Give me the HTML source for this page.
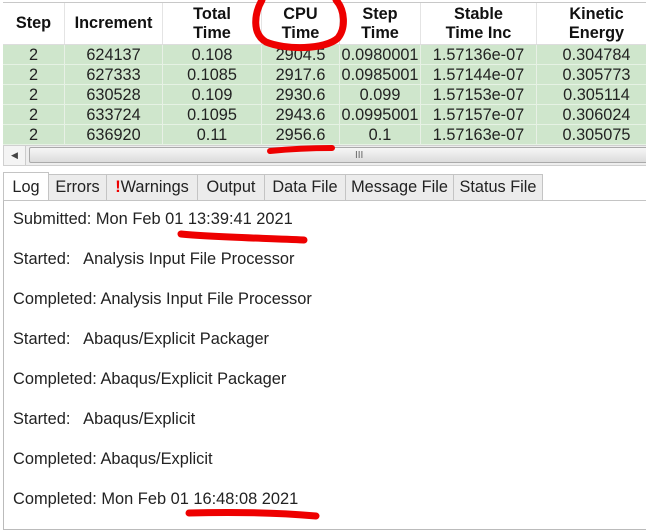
<!DOCTYPE html>
<html><head><meta charset="utf-8"><style>
*{margin:0;padding:0;box-sizing:border-box}
body{width:646px;height:520px;background:#fff;position:relative;overflow:hidden;font-family:"Liberation Sans","DejaVu Sans",sans-serif}
.tbl{position:absolute;left:3px;top:2px;width:660px;border-top:1px solid #c8c8c8}
.row{display:flex;height:20px;line-height:20px;font-size:16.3px;color:#222;background:#cfe6cc;border-bottom:1px solid #e6f2e4}
.hdr{height:42px;background:#fff;font-weight:bold;font-size:16.3px;line-height:19px;color:#111;border-bottom:1px solid #ddd}
.row div,.hdr div{text-align:center;border-right:1px solid #e8f0e6;white-space:nowrap}
.hdr div{border-right:1px solid #e4e4e4;display:flex;align-items:center;justify-content:center;flex-direction:column}
.c1{width:62px}.c2{width:98px}.c3{width:99px}.c4{width:78px}.c5{width:81px}.c6{width:116px}.c7{width:120px}
.sb{position:absolute;left:3px;top:145px;width:650px;height:21px;background:#eee;border:1px solid #d0d0d0}
.sb .b{position:absolute;left:0;top:0;width:22px;height:19px;background:#f4f4f4;border-right:1px solid #ccc;font-size:9px;line-height:19px;text-align:center;color:#444}
.sb .t{position:absolute;left:25px;top:1px;right:0;height:16px;background:linear-gradient(#f6f6f6,#dcdcdc);border:1px solid #aaa;border-radius:2px}
.sb .g{position:absolute;left:325px;top:0;font-size:10px;color:#666;line-height:16px}
.tabs{position:absolute;top:174px;left:3px;height:26px;display:flex}
.tab{height:26px;border:1px solid #c4c4c4;border-bottom:none;background:#ececec;font-size:16.3px;line-height:25px;text-align:center;color:#222;margin-right:-1px;white-space:nowrap;overflow:hidden}
.tab.sel{background:#fff;height:28px;margin-top:-2px;line-height:29px}
.panel{position:absolute;left:3px;top:200px;width:660px;height:330px;border:1px solid #bbb;border-top:1px solid #c4c4c4}
.ln{position:absolute;left:9px;font-size:16.4px;color:#222;white-space:pre}
</style></head><body>
<div class="tbl">
<div class="row hdr"><div class="c1">Step</div><div class="c2">Increment</div><div class="c3">Total<br>Time</div><div class="c4">CPU<br>Time</div><div class="c5">Step<br>Time</div><div class="c6">Stable<br>Time Inc</div><div class="c7">Kinetic<br>Energy</div></div>
<div class="row"><div class="c1">2</div><div class="c2">624137</div><div class="c3">0.108</div><div class="c4">2904.5</div><div class="c5">0.0980001</div><div class="c6">1.57136e-07</div><div class="c7">0.304784</div></div>
<div class="row"><div class="c1">2</div><div class="c2">627333</div><div class="c3">0.1085</div><div class="c4">2917.6</div><div class="c5">0.0985001</div><div class="c6">1.57144e-07</div><div class="c7">0.305773</div></div>
<div class="row"><div class="c1">2</div><div class="c2">630528</div><div class="c3">0.109</div><div class="c4">2930.6</div><div class="c5">0.099</div><div class="c6">1.57153e-07</div><div class="c7">0.305114</div></div>
<div class="row"><div class="c1">2</div><div class="c2">633724</div><div class="c3">0.1095</div><div class="c4">2943.6</div><div class="c5">0.0995001</div><div class="c6">1.57157e-07</div><div class="c7">0.306024</div></div>
<div class="row"><div class="c1">2</div><div class="c2">636920</div><div class="c3">0.11</div><div class="c4">2956.6</div><div class="c5">0.1</div><div class="c6">1.57163e-07</div><div class="c7">0.305075</div></div>
</div>
<div class="sb"><div class="b">◀</div><div class="t"><span class="g">III</span></div></div>
<div class="tabs">
<div class="tab sel" style="width:46px">Log</div>
<div class="tab" style="width:59px">Errors</div>
<div class="tab" style="width:92px"><span style="color:#e00;font-weight:bold">!</span>Warnings</div>
<div class="tab" style="width:68px">Output</div>
<div class="tab" style="width:82px">Data File</div>
<div class="tab" style="width:109px">Message File</div>
<div class="tab" style="width:90px">Status File</div>
</div>
<div class="panel">
<div class="ln" style="top:9px">Submitted: Mon Feb 01 13:39:41 2021</div>
<div class="ln" style="top:49px">Started:   Analysis Input File Processor</div>
<div class="ln" style="top:89px">Completed: Analysis Input File Processor</div>
<div class="ln" style="top:129px">Started:   Abaqus/Explicit Packager</div>
<div class="ln" style="top:169px">Completed: Abaqus/Explicit Packager</div>
<div class="ln" style="top:209px">Started:   Abaqus/Explicit</div>
<div class="ln" style="top:249px">Completed: Abaqus/Explicit</div>
<div class="ln" style="top:289px">Completed: Mon Feb 01 16:48:08 2021</div>
</div>
<svg width="646" height="520" style="position:absolute;left:0;top:0" fill="none" stroke="#e00" stroke-linecap="round">
<path d="M262 0 C254 14,252 34,266 42 C285 50,325 50,338 38 C346 28,345 10,336 0" stroke-width="7"/>
<path d="M270 151 C290 149,315 148,332 148" stroke-width="6"/>
<path d="M181 234 C210 237,260 238,304 240" stroke-width="7"/>
<path d="M189 513 C225 512,270 512,316 516" stroke-width="7"/>
</svg>
</body></html>
